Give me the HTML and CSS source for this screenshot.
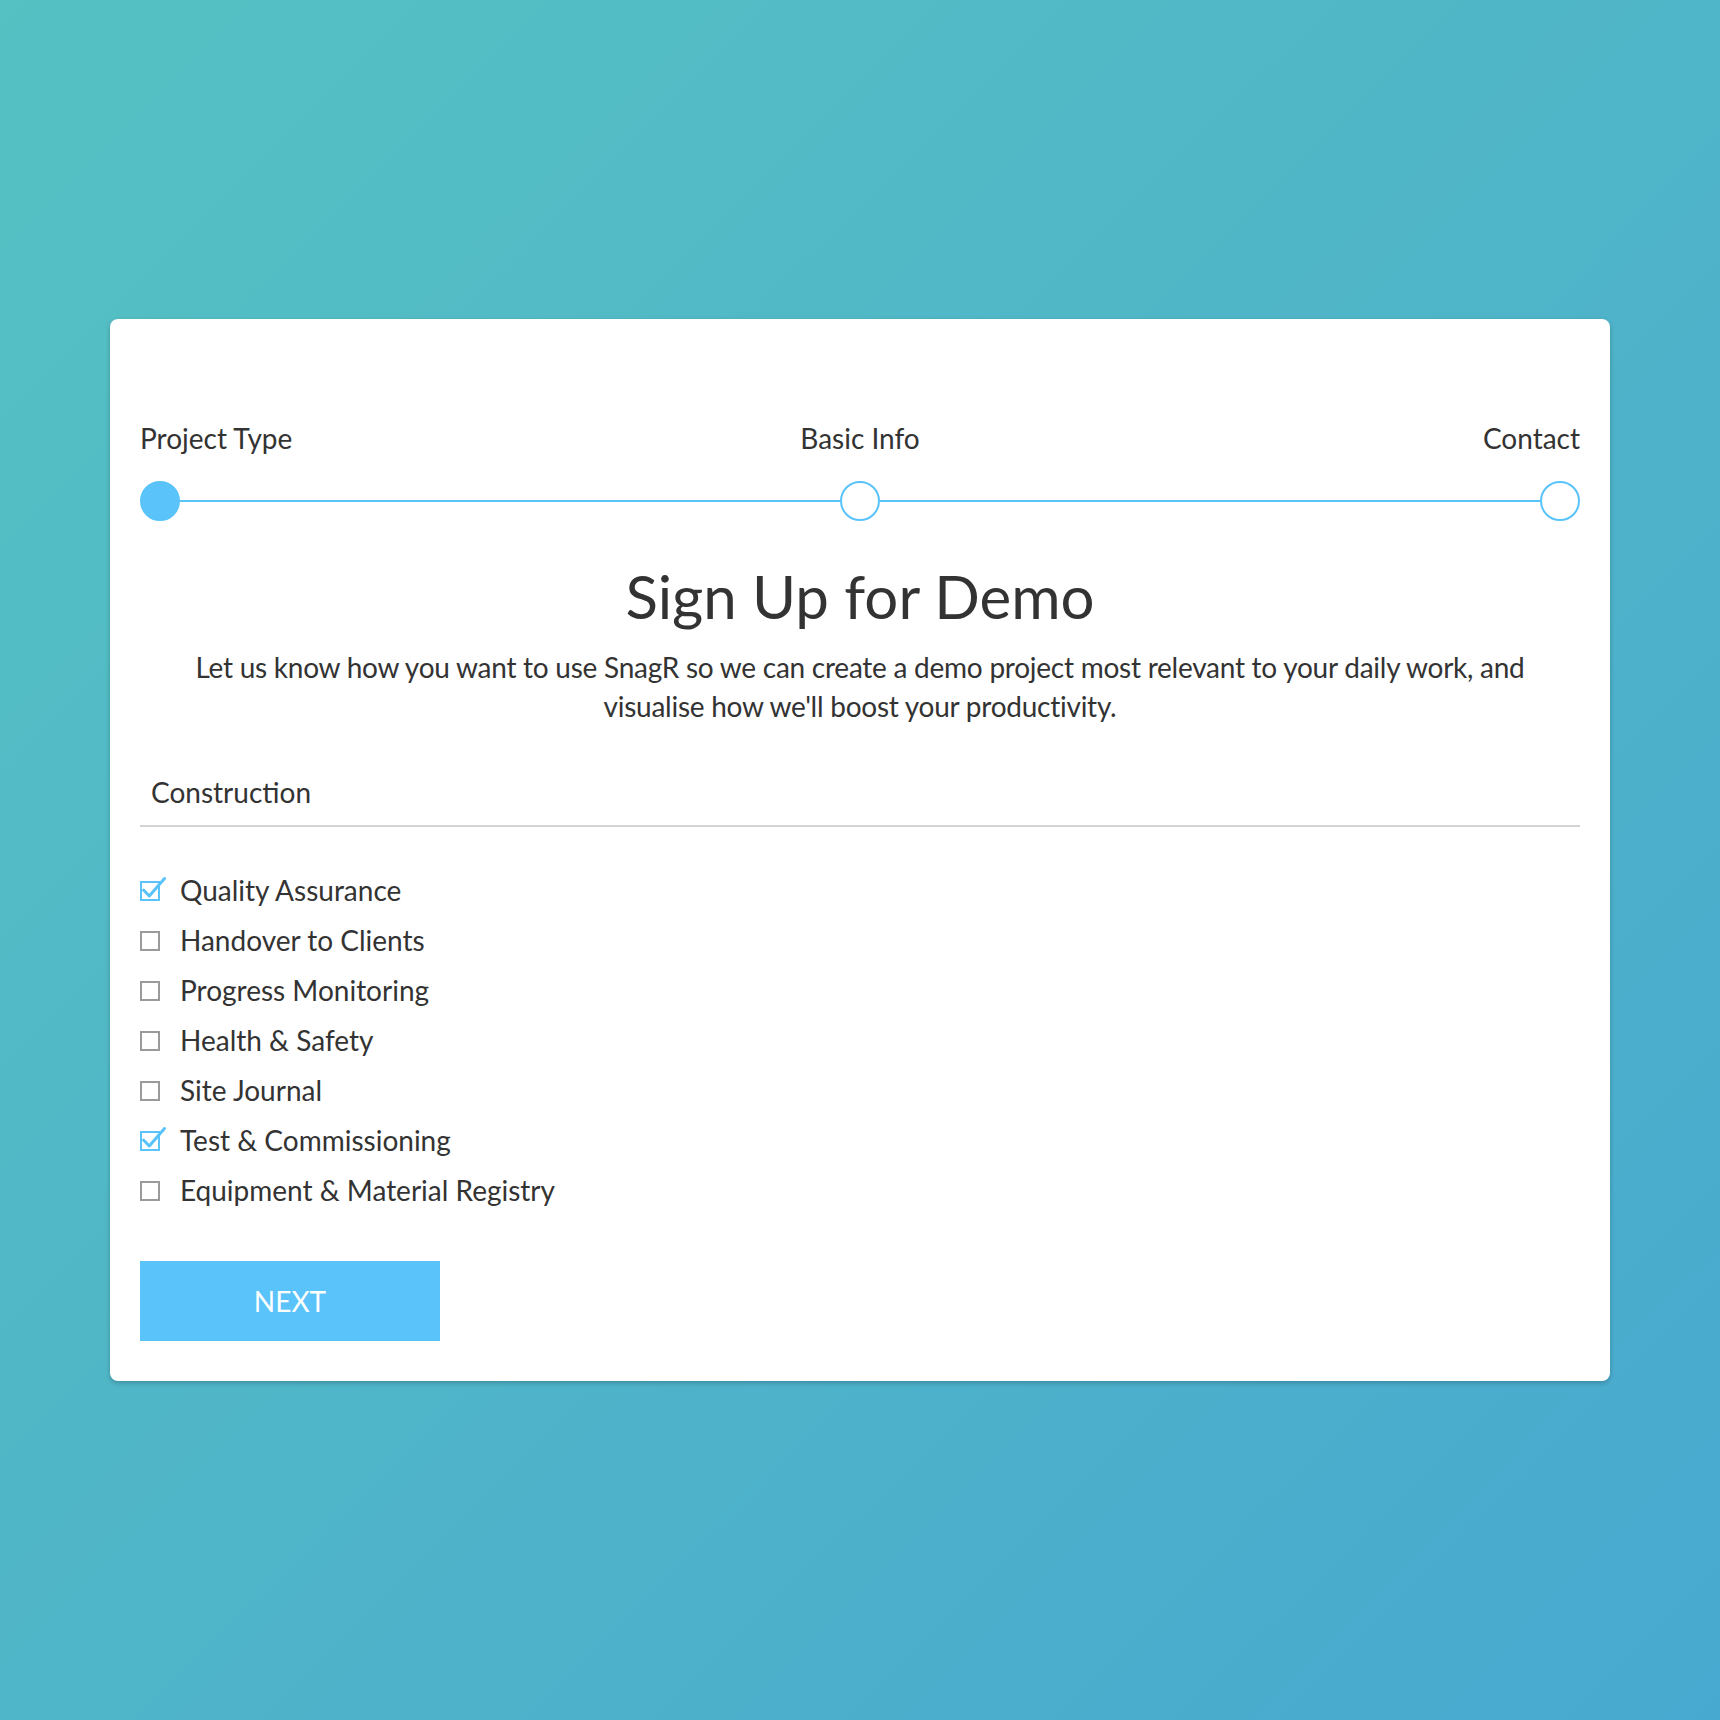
FILE: index.html
```html
<!DOCTYPE html>
<html lang="en">
<head>
<meta charset="utf-8">
<title>Sign Up for Demo</title>
<link rel="stylesheet" href="styles.css">
</head>
<body>
<div class="card">
  <div class="steps">
    <div class="step-labels">
      <span class="step-label step-label-start">Project Type</span>
      <span class="step-label step-label-mid">Basic Info</span>
      <span class="step-label step-label-end">Contact</span>
    </div>
    <div class="track">
      <span class="dot dot-active"></span>
      <span class="track-line"></span>
      <span class="dot"></span>
      <span class="track-line"></span>
      <span class="dot"></span>
    </div>
  </div>

  <h1 class="title">Sign Up for Demo</h1>
  <p class="lead">Let us know how you want to use SnagR so we can create a demo project most relevant to your daily work, and visualise how we'll boost your productivity.</p>

  <div class="select">Construction</div>

  <ul class="options">
    <li class="option">
      <span class="box">
        <svg class="box-svg" width="20" height="20" viewBox="0 0 20 20"><rect x="1" y="1" width="18" height="18" fill="none" stroke="#5ac3fa" stroke-width="2"/><polyline points="3.5,9 9.3,15 24.5,-2.5" fill="none" stroke="#5ac3fa" stroke-width="3" stroke-linecap="round" stroke-linejoin="round"/></svg>
      </span>
      <span class="label">Quality Assurance</span>
    </li>
    <li class="option">
      <span class="box"><svg class="box-svg" width="20" height="20" viewBox="0 0 20 20"><rect x="1" y="1" width="18" height="18" fill="none" stroke="#9a9a9a" stroke-width="2"/></svg></span>
      <span class="label">Handover to Clients</span>
    </li>
    <li class="option">
      <span class="box"><svg class="box-svg" width="20" height="20" viewBox="0 0 20 20"><rect x="1" y="1" width="18" height="18" fill="none" stroke="#9a9a9a" stroke-width="2"/></svg></span>
      <span class="label">Progress Monitoring</span>
    </li>
    <li class="option">
      <span class="box"><svg class="box-svg" width="20" height="20" viewBox="0 0 20 20"><rect x="1" y="1" width="18" height="18" fill="none" stroke="#9a9a9a" stroke-width="2"/></svg></span>
      <span class="label">Health &amp; Safety</span>
    </li>
    <li class="option">
      <span class="box"><svg class="box-svg" width="20" height="20" viewBox="0 0 20 20"><rect x="1" y="1" width="18" height="18" fill="none" stroke="#9a9a9a" stroke-width="2"/></svg></span>
      <span class="label">Site Journal</span>
    </li>
    <li class="option">
      <span class="box">
        <svg class="box-svg" width="20" height="20" viewBox="0 0 20 20"><rect x="1" y="1" width="18" height="18" fill="none" stroke="#5ac3fa" stroke-width="2"/><polyline points="3.5,9 9.3,15 24.5,-2.5" fill="none" stroke="#5ac3fa" stroke-width="3" stroke-linecap="round" stroke-linejoin="round"/></svg>
      </span>
      <span class="label">Test &amp; Commissioning</span>
    </li>
    <li class="option">
      <span class="box"><svg class="box-svg" width="20" height="20" viewBox="0 0 20 20"><rect x="1" y="1" width="18" height="18" fill="none" stroke="#9a9a9a" stroke-width="2"/></svg></span>
      <span class="label">Equipment &amp; Material Registry</span>
    </li>
  </ul>

  <button class="next" type="button">NEXT</button>
</div>
</body>
</html>
```
FILE: styles.css
```css
* { box-sizing: border-box; }

html, body {
  margin: 0;
  padding: 0;
}

body {
  min-height: 1720px;
  background: linear-gradient(135deg, #55c1c3 0%, #4fb5c8 50%, #48a9d0 100%);
  font-family: Lato, "Open Sans", "Liberation Sans", sans-serif;
  color: #333333;
  padding: 319px 110px 0 110px;
}

.card {
  width: 1500px;
  background: #ffffff;
  border-radius: 8px;
  box-shadow: 0 2px 5px rgba(0, 0, 0, 0.22);
  padding: 102px 30px 40px 30px;
}

.step-labels {
  display: grid;
  grid-template-columns: 1fr auto 1fr;
  font-size: 28px;
  line-height: 34px;
}

.step-label-start { justify-self: start; }
.step-label-mid { justify-self: center; }
.step-label-end { justify-self: end; }

.track {
  display: flex;
  align-items: center;
  height: 40px;
  margin-top: 26px;
}

.dot {
  width: 40px;
  height: 40px;
  border-radius: 50%;
  border: 2px solid #5ac3fa;
  background: #ffffff;
  flex: none;
}

.dot-active {
  background: #5ac3fa;
}

.track-line {
  flex: 1;
  height: 2px;
  background: #5ac3fa;
}

.title {
  margin: 40px 0 0 0;
  font-size: 60px;
  line-height: 70px;
  font-weight: 400;
  text-align: center;
}

.lead {
  margin: 17px 30px 0 30px;
  font-size: 28px;
  letter-spacing: -0.25px;
  line-height: 39px;
  text-align: center;
}

.select {
  margin-top: 49px;
  font-size: 28px;
  line-height: 34px;
  padding: 0 0 16px 11px;
  border-bottom: 2px solid #d3d3d3;
}

.options {
  list-style: none;
  margin: 38px 0 0 0;
  padding: 0;
}

.option {
  display: flex;
  align-items: center;
  height: 50px;
  font-size: 28px;
  line-height: 50px;
}

.box {
  display: flex;
  width: 20px;
  height: 20px;
  flex: none;
  margin-top: 1px;
}

.box-svg {
  overflow: visible;
}

.label {
  margin-left: 20px;
}

.next {
  display: block;
  margin-top: 46px;
  width: 300px;
  height: 80px;
  border: none;
  border-radius: 0;
  background: #5ac3fa;
  color: #ffffff;
  font-family: Lato, "Open Sans", "Liberation Sans", sans-serif;
  font-size: 28px;
  padding: 0;
  cursor: pointer;
}
```
